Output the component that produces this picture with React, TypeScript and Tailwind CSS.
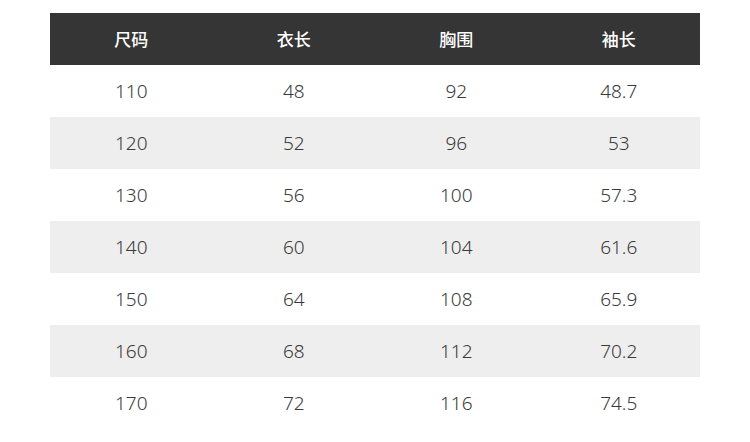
import React from "react";

const rows = [
  ["110", "48", "92", "48.7"],
  ["120", "52", "96", "53"],
  ["130", "56", "100", "57.3"],
  ["140", "60", "104", "61.6"],
  ["150", "64", "108", "65.9"],
  ["160", "68", "112", "70.2"],
  ["170", "72", "116", "74.5"],
];

export default function App() {
  return (
    <div className="w-[750px] h-[442px] bg-white pt-[13px] px-[50px] font-['Noto_Sans','Noto_Sans_CJK_SC',sans-serif]">
      <div className="grid grid-cols-4 h-[52px] bg-[#353535] text-white text-[17px] font-medium items-center text-center font-['Noto_Sans_CJK_SC',sans-serif]">
        <div>尺码</div>
        <div>衣长</div>
        <div>胸围</div>
        <div>袖长</div>
      </div>
      {rows.map((r, i) => (
        <div
          key={i}
          className={
            i % 2 === 1
              ? "grid grid-cols-4 h-[52px] items-center text-center text-[19px] font-light text-[#3a3a3a] bg-[#eeeeee]"
              : "grid grid-cols-4 h-[52px] items-center text-center text-[19px] font-light text-[#3a3a3a] bg-white"
          }
        >
          {r.map((c, j) => (
            <div key={j}>{c}</div>
          ))}
        </div>
      ))}
    </div>
  );
}
